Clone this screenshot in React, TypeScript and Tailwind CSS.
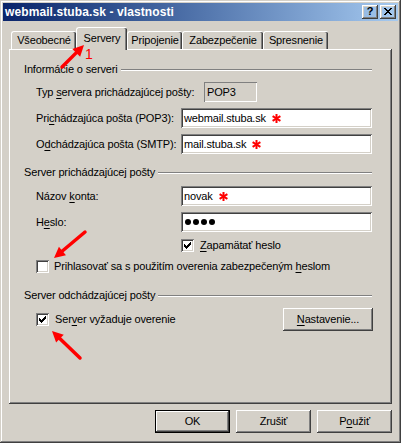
import React from "react";

const raised =
  "shadow-[inset_-1px_-1px_#404040,inset_1px_1px_#ffffff,inset_-2px_-2px_#808080,inset_2px_2px_#d4d0c8]";
const sunken =
  "shadow-[inset_1px_1px_#808080,inset_-1px_-1px_#ffffff,inset_2px_2px_#404040,inset_-2px_-2px_#d4d0c8]";

function Star() {
  return (
    <svg width="9" height="9" viewBox="0 0 9 9" className="ml-[6px] shrink-0">
      <g stroke="#ff0000" strokeWidth="2">
        <line x1="4.5" y1="0" x2="4.5" y2="9" />
        <line x1="0.6" y1="2.2" x2="8.4" y2="6.8" />
        <line x1="0.6" y1="6.8" x2="8.4" y2="2.2" />
      </g>
    </svg>
  );
}

function Check() {
  const tops = [2, 3, 4, 3, 2, 1, 0];
  return (
    <svg width="13" height="13" viewBox="0 0 13 13" className="absolute left-0 top-0" shapeRendering="crispEdges">
      {tops.map((t, i) => (
        <rect key={i} x={3 + i} y={3 + t} width="1" height="3" fill="#000" />
      ))}
    </svg>
  );
}

function Checkbox({ checked }: { checked?: boolean }) {
  return (
    <div className={`relative w-[13px] h-[13px] shrink-0 bg-white ${sunken}`}>
      {checked && <Check />}
    </div>
  );
}

function U({ children }: { children: React.ReactNode }) {
  return <span className="underline underline-offset-[2px]">{children}</span>;
}

function GroupHeader({ label }: { label: string }) {
  return (
    <div className="flex items-center h-[13px]">
      <span className="whitespace-nowrap">{label}</span>
      <div className="flex-1 ml-[3px] mt-[1px] h-0 border-t border-t-[#808080] border-b border-b-white" />
    </div>
  );
}

function Arrow({ x1, y1, x2, y2 }: { x1: number; y1: number; x2: number; y2: number }) {
  const dx = x2 - x1;
  const dy = y2 - y1;
  const len = Math.hypot(dx, dy);
  const ux = dx / len;
  const uy = dy / len;
  const hl = 11;
  const hw = 5.5;
  const bx = x2 - ux * hl;
  const by = y2 - uy * hl;
  const px = -uy;
  const py = ux;
  return (
    <g>
      <line x1={x1} y1={y1} x2={bx + ux * 2} y2={by + uy * 2} stroke="#ff0000" strokeWidth="3.5" strokeLinecap="round" />
      <polygon
        points={`${x2},${y2} ${bx + px * hw},${by + py * hw} ${bx - px * hw},${by - py * hw}`}
        fill="#ff0000"
      />
    </g>
  );
}

function Tab({ label, w, selected }: { label: string; w: string; selected?: boolean }) {
  if (selected) {
    return (
      <div
        className={`relative z-10 ${w} h-[23px] -mb-[1px] bg-[#d4d0c8] border-t border-l border-white rounded-tl-[3px] rounded-tr-[2px] shadow-[inset_-1px_0_#404040,inset_-2px_0_#808080] flex justify-center pt-[4px]`}
      >
        <span className="leading-[13px]">{label}</span>
      </div>
    );
  }
  return (
    <div
      className={`${w} h-[18px] border-t border-l border-white rounded-tl-[3px] rounded-tr-[2px] shadow-[inset_-1px_0_#404040,inset_-2px_0_#808080] flex justify-center pt-[2px]`}
    >
      <span className="leading-[13px]">{label}</span>
    </div>
  );
}

function Btn({ children, w, def }: { children: React.ReactNode; w: string; def?: boolean }) {
  if (def) {
    return (
      <div className={`${w} h-[23px] border border-black`}>
        <div className={`w-full h-full flex items-center justify-center ${raised}`}>{children}</div>
      </div>
    );
  }
  return <div className={`${w} h-[23px] flex items-center justify-center ${raised}`}>{children}</div>;
}

export default function App() {
  return (
    <div className="relative w-[401px] h-[443px] overflow-hidden bg-[#d4d0c8] font-['Liberation_Sans',Arial,sans-serif] text-[11px] tracking-[-0.15px] text-black leading-[13px]">
      <div className="w-full h-full p-[3px] flex flex-col shadow-[inset_-1px_-1px_#404040,inset_1px_1px_#d4d0c8,inset_-2px_-2px_#808080,inset_2px_2px_#ffffff]">
        {/* Title bar */}
        <div className="h-[18px] shrink-0 flex items-center bg-gradient-to-r from-[#0a246a] to-[#a6caf0] pl-[2px] pr-[2px]">
          <span className="text-white font-bold text-[12px] leading-[14px] tracking-[0.1px]">webmail.stuba.sk - vlastnosti</span>
          <div className="ml-auto flex gap-[2px]">
            <div className={`w-[16px] h-[14px] flex items-center justify-center ${raised}`}>
              <span className="font-bold text-[11px] leading-[11px] -mt-[1px]">?</span>
            </div>
            <div className={`relative w-[16px] h-[14px] ${raised}`}>
              <svg width="16" height="14" viewBox="0 0 16 14" className="absolute left-0 top-0" shapeRendering="crispEdges">
                {[0, 1, 2, 3, 4, 5, 6].map((i) => {
                  const a = i <= 3 ? i : 6 - i;
                  return (
                    <g key={i} fill="#000">
                      <rect x={4 + a} y={3 + i} width="2" height="1" />
                      <rect x={10 - a} y={3 + i} width="2" height="1" />
                    </g>
                  );
                })}
              </svg>
            </div>
          </div>
        </div>

        {/* Body */}
        <div className="flex-1 flex flex-col px-[6px] pt-[6px] pb-[7px]">
          {/* Tabs */}
          <div className="h-[22px] flex items-end pl-[2px]">
            <Tab label="Všeobecné" w="w-[65px]" />
            <Tab label="Servery" w="w-[51px]" selected />
            <Tab label="Pripojenie" w="w-[55px]" />
            <Tab label="Zabezpečenie" w="w-[81px]" />
            <Tab label="Spresnenie" w="w-[65px]" />
          </div>

          {/* Panel */}
          <div className="flex-1 flex flex-col pl-[15px] pr-[20px] pt-[14px] shadow-[inset_-1px_-1px_#404040,inset_1px_1px_#ffffff,inset_-2px_-2px_#808080]">
            <GroupHeader label="Informácie o serveri" />
            <div className="pl-[12px] flex flex-col">
              <div className="mt-[6px] h-[20px] flex items-center">
                <span className="w-[168px] shrink-0 whitespace-nowrap">
                  Typ <U>s</U>ervera prichádzajúcej pošty:
                </span>
                <div className="w-[53px] h-[20px] flex items-center pl-[3px] shadow-[inset_1px_1px_#808080,inset_-1px_-1px_#ffffff]">
                  POP3
                </div>
              </div>
              <div className="mt-[6px] h-[20px] flex items-center">
                <span className="w-[145px] shrink-0 whitespace-nowrap">
                  Pri<U>c</U>hádzajúca pošta (POP3):
                </span>
                <div className={`flex-1 h-[20px] bg-white flex items-center pl-[3px] ${sunken}`}>
                  webmail.stuba.sk
                  <Star />
                </div>
              </div>
              <div className="mt-[6px] h-[20px] flex items-center">
                <span className="w-[145px] shrink-0 whitespace-nowrap">
                  O<U>d</U>chádzajúca pošta (SMTP):
                </span>
                <div className={`flex-1 h-[20px] bg-white flex items-center pl-[3px] ${sunken}`}>
                  mail.stuba.sk
                  <Star />
                </div>
              </div>
            </div>

            <div className="mt-[12px]">
              <GroupHeader label="Server prichádzajúcej pošty" />
            </div>
            <div className="pl-[12px] flex flex-col">
              <div className="mt-[7px] h-[20px] flex items-center">
                <span className="w-[145px] shrink-0 whitespace-nowrap">
                  Názov <U>k</U>onta:
                </span>
                <div className={`flex-1 h-[20px] bg-white flex items-center pl-[3px] ${sunken}`}>
                  novak
                  <Star />
                </div>
              </div>
              <div className="mt-[6px] h-[20px] flex items-center">
                <span className="w-[145px] shrink-0 whitespace-nowrap">
                  H<U>e</U>slo:
                </span>
                <div className={`flex-1 h-[20px] bg-white flex items-center gap-[2px] pl-[4px] ${sunken}`}>
                  <span className="w-[6px] h-[6px] rounded-full bg-black" />
                  <span className="w-[6px] h-[6px] rounded-full bg-black" />
                  <span className="w-[6px] h-[6px] rounded-full bg-black" />
                  <span className="w-[6px] h-[6px] rounded-full bg-black" />
                </div>
              </div>
              <div className="mt-[7px] h-[13px] flex items-center pl-[145px]">
                <Checkbox checked />
                <span className="ml-[6px] whitespace-nowrap">
                  <U>Z</U>apamätať heslo
                </span>
              </div>
              <div className="mt-[8px] h-[13px] flex items-center">
                <Checkbox />
                <span className="ml-[5px] whitespace-nowrap">
                  Prihlasovať sa s použitím overenia zabezpečeným <U>h</U>eslom
                </span>
              </div>
            </div>

            <div className="mt-[16px]">
              <GroupHeader label="Server odchádzajúcej pošty" />
            </div>
            <div className="pl-[12px] mt-[6px] h-[23px] flex items-center">
              <Checkbox checked />
              <span className="ml-[6px] whitespace-nowrap">
                Ser<U>v</U>er vyžaduje overenie
              </span>
              <div className="ml-auto -mr-[1px]">
                <Btn w="w-[90px]">
                  <span>
                    <U>N</U>astavenie...
                  </span>
                </Btn>
              </div>
            </div>
          </div>

          {/* Bottom buttons */}
          <div className="mt-[6px] flex justify-end gap-[6px]">
            <Btn w="w-[75px]" def>
              OK
            </Btn>
            <Btn w="w-[75px]">Zrušiť</Btn>
            <Btn w="w-[75px]">
              <span>
                P<U>o</U>užiť
              </span>
            </Btn>
          </div>
        </div>
      </div>

      {/* Red annotation overlay */}
      <svg className="absolute left-0 top-0 z-20 pointer-events-none" width="401" height="443" viewBox="0 0 401 443">
        <Arrow x1={62} y1={67} x2={84} y2={45} />
        <Arrow x1={85} y1={232} x2={54} y2={258} />
        <Arrow x1={80} y1={358} x2={52} y2={331} />
      </svg>
      <span className="absolute z-20 left-[85px] top-[47px] text-[#ff0000] text-[14px] leading-[14px]">1</span>
    </div>
  );
}
